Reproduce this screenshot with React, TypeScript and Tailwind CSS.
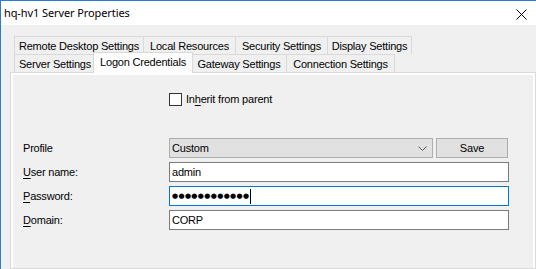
const ui = { fontFamily: '"Liberation Sans", Arial, sans-serif' };

type Tab = { label: string; w: string; active?: boolean };

const topRow: Tab[] = [
  { label: "Remote Desktop Settings", w: "w-[129px]" },
  { label: "Local Resources", w: "w-[92px]" },
  { label: "Security Settings", w: "w-[92px]" },
  { label: "Display Settings", w: "w-[85px]" },
];

const bottomRow: Tab[] = [
  { label: "Server Settings", w: "w-[81px]" },
  { label: "Logon Credentials", w: "w-[96px]", active: true },
  { label: "Gateway Settings", w: "w-[95px]" },
  { label: "Connection Settings", w: "w-[109px]" },
];

function TabRow({ tabs }: { tabs: Tab[] }) {
  return (
    <div className="flex h-[18px] items-end">
      {tabs.map((t, i) => {
        const last = i === tabs.length - 1;
        if (t.active) {
          return (
            <div
              key={t.label}
              className={`relative z-10 -mx-[2px] -mb-px box-content h-[20px] ${t.w} border border-b-0 border-[#d9d9d9] bg-white px-[1px] text-center leading-[19px]`}
            >
              {t.label}
            </div>
          );
        }
        return (
          <div
            key={t.label}
            className={`h-[18px] ${t.w} shrink-0 border-l border-t border-[#d9d9d9] ${last ? "border-r" : ""} bg-[#f0f0f0] text-center leading-[18px]`}
          >
            {t.label}
          </div>
        );
      })}
    </div>
  );
}

function Label({ u, rest }: { u?: string; rest: string }) {
  return (
    <div className="w-[146px] shrink-0">
      {u && <span className="underline underline-offset-2">{u}</span>}
      {rest}
    </div>
  );
}

export default function App() {
  return (
    <div
      className="flex h-[269px] w-[536px] flex-col overflow-hidden border-l border-t border-[#2b7bd6] bg-[#f0f0f0] text-[11px] tracking-[-0.2px] text-black"
      style={ui}
    >
      {/* Title bar */}
      <div className="flex h-[24px] shrink-0 items-center justify-between bg-white pl-[3px] pr-[9px]">
        <span
          className="text-[11px] tracking-[-0.1px]"
          style={{ fontFamily: '"Noto Sans", "Open Sans", sans-serif' }}
        >
          hq-hv1 Server Properties
        </span>
        <svg width="11" height="11" viewBox="0 0 11 11" className="mt-[2px]">
          <path d="M0.5 0.5 L10.5 10.5 M10.5 0.5 L0.5 10.5" stroke="#000" strokeWidth="1" />
        </svg>
      </div>

      {/* Tabs */}
      <div className="flex flex-1 flex-col pl-[9px] pt-[11px]">
        <div className="pl-[4px]">
          <TabRow tabs={topRow} />
          <TabRow tabs={bottomRow} />
        </div>

        <div className="flex-1 border border-[#d9d9d9] bg-white p-[2px] pb-0">
          <div className="h-full bg-[#f0f0f0] pl-[10px] pt-[18px]">
            <div className="flex h-[13px] items-center pl-[146px]">
              <div className="h-[13px] w-[13px] border border-[#333333] bg-white" />
              <span className="ml-[4px]">
                In<span className="underline underline-offset-2">h</span>erit from parent
              </span>
            </div>

            <div className="mt-[32px] flex h-[20px] items-center">
              <Label rest="Profile" />
              <div className="flex h-[20px] w-[264px] items-center justify-between border border-[#adadad] bg-[#e1e1e1] pl-[2px] pr-[5px]">
                <span>Custom</span>
                <svg width="9" height="5" viewBox="0 0 9 5">
                  <path d="M0.5 0.5 L4.5 4.5 L8.5 0.5" stroke="#555" strokeWidth="1" fill="none" />
                </svg>
              </div>
              <div className="ml-[3px] flex h-[20px] w-[72px] items-center justify-center border border-[#adadad] bg-[#e1e1e1]">
                Save
              </div>
            </div>

            <div className="mt-[4px] flex h-[20px] items-center">
              <Label u="U" rest="ser name:" />
              <div className="flex h-[20px] w-[340px] items-center border border-[#7a7a7a] bg-white pl-[2px]">
                admin
              </div>
            </div>

            <div className="mt-[4px] flex h-[20px] items-center">
              <Label u="P" rest="assword:" />
              <div className="flex h-[20px] w-[340px] items-center border border-[#0078d7] bg-white pl-[2px]">
                <span className="text-[7px] tracking-[0.35px]" style={{ fontFamily: '"DejaVu Sans", sans-serif' }}>
                  ●●●●●●●●●●●●
                </span>
                <span className="h-[15px] w-px bg-black" />
              </div>
            </div>

            <div className="mt-[4px] flex h-[20px] items-center">
              <Label u="D" rest="omain:" />
              <div className="flex h-[20px] w-[340px] items-center border border-[#7a7a7a] bg-white pl-[2px]">
                CORP
              </div>
            </div>
          </div>
        </div>
      </div>
    </div>
  );
}
